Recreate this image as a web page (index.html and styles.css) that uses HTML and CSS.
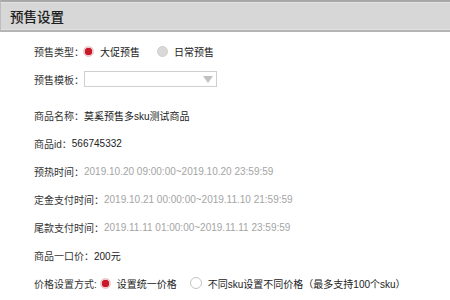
FILE: index.html
```html
<!DOCTYPE html>
<html lang="zh-CN">
<head>
<meta charset="utf-8">
<title>预售设置</title>
<link rel="stylesheet" href="styles.css">
</head>
<body>
<div class="panel">
  <div class="panel-head">预售设置</div>
  <div class="panel-body">
    <div class="row">
      <span class="label">预售类型：</span>
      <span class="radio checked"></span><span class="opt">大促预售</span>
      <span class="radio disabled"></span><span class="opt">日常预售</span>
    </div>
    <div class="row row-select">
      <span class="label">预售模板：</span>
      <div class="select"><span class="caret"></span></div>
    </div>
    <div class="row"><span class="label">商品名称：</span><span class="val">莫奚预售多sku测试商品</span></div>
    <div class="row"><span class="label">商品id：</span><span class="val">566745332</span></div>
    <div class="row"><span class="label">预热时间：</span><span class="val muted">2019.10.20 09:00:00~2019.10.20 23:59:59</span></div>
    <div class="row"><span class="label">定金支付时间：</span><span class="val muted">2019.10.21 00:00:00~2019.11.10 21:59:59</span></div>
    <div class="row"><span class="label">尾款支付时间：</span><span class="val muted">2019.11.11 01:00:00~2019.11.11 23:59:59</span></div>
    <div class="row"><span class="label">商品一口价：</span><span class="val">200元</span></div>
    <div class="row row-price">
      <span class="label">价格设置方式:</span>
      <span class="radio checked"></span><span class="opt">设置统一价格</span>
      <span class="radio empty"></span><span class="opt">不同sku设置不同价格（最多支持100个sku）</span>
    </div>
  </div>
</div>
</body>
</html>
```
FILE: styles.css
```css
* { box-sizing: border-box; }
html, body { margin: 0; padding: 0; background: #fff; }
body {
  font-family: "Liberation Sans", "Noto Sans CJK SC", sans-serif;
  font-size: 10px;
  color: #333;
  width: 450px;
  height: 300px;
  overflow: hidden;
}
.panel-head {
  height: 32px;
  background: #d7d7d7;
  border-top: 2px solid #a8a8a8;
  border-bottom: 2px solid #b4b4b4;
  border-left: 1px solid #bdbdbd;
  box-shadow: inset 0 1px 0 #e2e2e2, inset 0 -1px 0 #e2e2e2;
  padding-left: 9px;
  font-size: 13.5px;
  font-weight: 500;
  line-height: 28px;
  color: #1e1e1e;
  font-family: "Noto Sans CJK SC", sans-serif;
}
.panel-body {
  padding: 5px 0 0 34px;
}
.row {
  display: flex;
  align-items: center;
  height: 28px;
  white-space: nowrap;
}
.row-select { margin-bottom: 8px; }
.label { color: #333; }
.val { color: #222; }
.val.muted { color: #a4a4a4; }
.opt { color: #222; margin-left: 6px; margin-right: 17px; }
.row-price .label { margin-right: 4px; }
.row-price .opt { margin-right: 13px; }
.radio {
  width: 11px;
  height: 11px;
  border-radius: 50%;
  flex: none;
}
.radio.checked {
  background: radial-gradient(circle, #c8192b 0 3.5px, #f2c9cc 4px 100%);
  border: 1px solid #e6c4c6;
  margin-left: -1px;
}
.radio.disabled {
  background: #d9d9d9;
  border: 1px solid #cfcfcf;
}
.radio.empty {
  background: #fff;
  border: 1px solid #c4c4c4;
  width: 12px;
  height: 12px;
}
.select {
  width: 133px;
  height: 16px;
  border: 1px solid #cfcfcf;
  background: #fff;
  display: flex;
  align-items: center;
  justify-content: flex-end;
  padding-right: 3px;
}
.caret {
  width: 0;
  height: 0;
  border-left: 5px solid transparent;
  border-right: 5px solid transparent;
  border-top: 7px solid #c2c2c2;
}
```
